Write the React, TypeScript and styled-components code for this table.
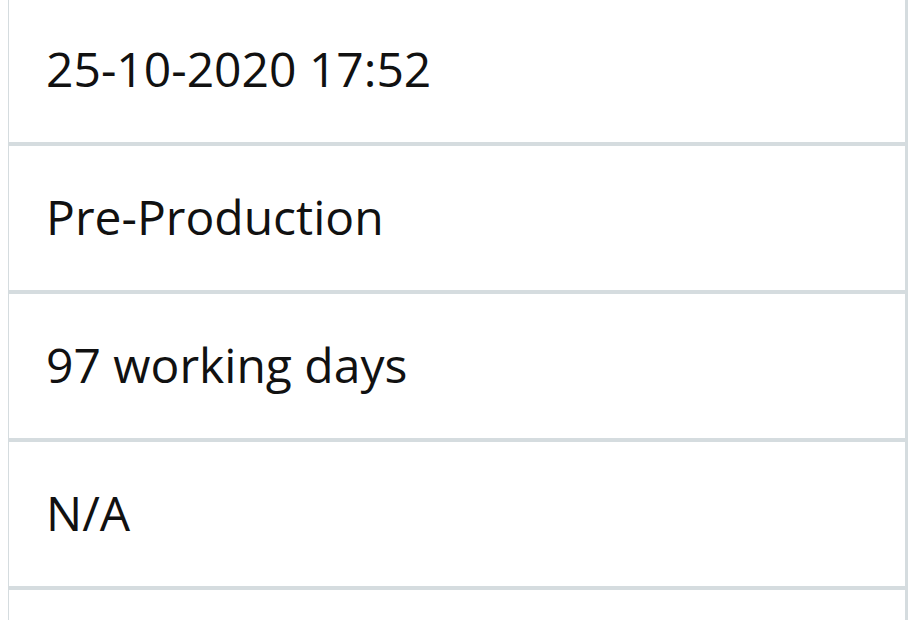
import React from "react";
import styled, { createGlobalStyle } from "styled-components";

const GlobalStyle = createGlobalStyle`
  html, body {
    margin: 0;
    padding: 0;
    background: #ffffff;
    overflow: hidden;
  }
  body {
    font-family: "Open Sans", "Noto Sans", sans-serif;
    color: #111111;
  }
`;

const Page = styled.div`
  padding: 0 3px 0 8px;
  margin-top: -2px;
`;

const List = styled.div`
  display: flex;
  flex-direction: column;
  border-left: 1px solid #d5dcdf;
  border-right: 3px solid #d5dcdf;
`;

const Row = styled.div`
  box-sizing: border-box;
  height: 148px;
  padding: 38px 36px 0 37px;
  border-bottom: 4px solid #d5dcdf;
  font-size: 48px;
  line-height: 65px;
  white-space: nowrap;
`;

const values = ["25-10-2020 17:52", "Pre-Production", "97 working days", "N/A", ""];

export default function App() {
  return (
    <>
      <GlobalStyle />
      <Page>
        <List>
          {values.map((v, i) => (
            <Row key={i}>{v}</Row>
          ))}
        </List>
      </Page>
    </>
  );
}
